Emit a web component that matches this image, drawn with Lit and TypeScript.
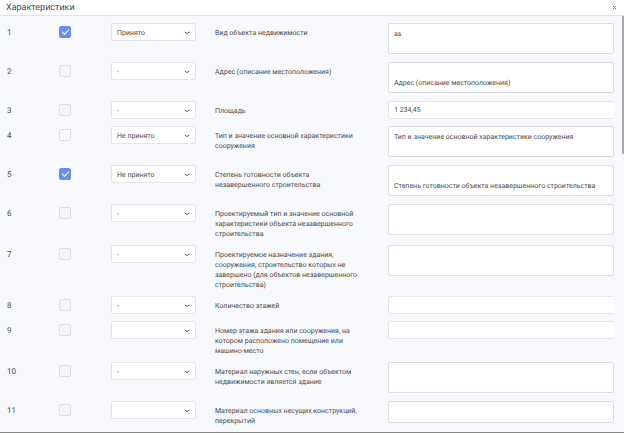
import { LitElement, html, css, svg } from "lit";
import { customElement } from "lit/decorators.js";
import { classMap } from "lit/directives/class-map.js";

type FieldKind = "area" | "short" | "line";

interface Row {
  label: string;
  status: string;
  enabled?: boolean;
  checked?: boolean;
  kind: FieldKind;
  value: string;
}

const rows: Row[] = [
  { label: "Вид объекта недвижимости", status: "Принято", enabled: true, checked: true, kind: "area", value: "as" },
  { label: "Адрес (описание местоположения)", status: "-", kind: "area", value: "\nАдрес (описание местоположения)" },
  { label: "Площадь", status: "-", kind: "line", value: "1 234,45" },
  { label: "Тип и значение основной характеристики сооружения", status: "Не принято", enabled: true, kind: "area", value: "Тип и значение основной характеристики сооружения" },
  { label: "Степень готовности объекта незавершенного строительства", status: "Не принято", enabled: true, checked: true, kind: "area", value: "\nСтепень готовности объекта незавершенного строительства" },
  { label: "Проектируемый тип и значение основной характеристики объекта незавершенного строительства", status: "-", kind: "area", value: "" },
  { label: "Проектируемое назначение здания, сооружения, строительство которых не завершено (для объектов незавершенного строительства)", status: "-", kind: "area", value: "" },
  { label: "Количество этажей", status: "-", kind: "line", value: "" },
  { label: "Номер этажа здания или сооружения, на котором расположено помещение или машино-место", status: "", kind: "line", value: "" },
  { label: "Материал наружных стен, если объектом недвижимости является здание", status: "-", kind: "area", value: "" },
  { label: "Материал основных несущих конструкций, перекрытий", status: "", kind: "short", value: "" },
];

const statuses = ["", "-", "Принято", "Не принято"];

@customElement("app-root")
export class AppRoot extends LitElement {
  static styles = css`
    :host {
      display: flex;
      flex-direction: column;
      position: relative;
      height: 100vh;
      box-sizing: border-box;
      overflow: hidden;
      border-bottom: 1px solid #858587;
      background: #f8f9fc;
      color: #494b50;
      font: 7px/10px Roboto, "Noto Sans", sans-serif;
      text-rendering: geometricPrecision;
    }
    * {
      box-sizing: border-box;
    }
    .header {
      display: flex;
      flex: none;
      align-items: center;
      justify-content: space-between;
      height: 16px;
      padding: 0 6px;
      background: #fff;
      border-bottom: 1px solid #e2e3e7;
    }
    .title {
      margin: 0;
      font-size: 9px;
      font-weight: 400;
      line-height: 14px;
    }
    .close {
      display: flex;
      padding: 1px;
      border: 0;
      background: none;
      color: #77797e;
    }
    .body {
      flex: 1;
      min-height: 0;
      overflow: auto;
      scrollbar-width: none;
      padding: 7px 10px 0 7px;
    }
    .row {
      display: grid;
      grid-template-columns: 52fr 52fr 104fr 173fr 226fr;
      align-items: start;
      padding-bottom: 6px;
    }
    .num,
    .label {
      padding-top: 5px;
    }
    .label {
      max-width: 146px;
    }
    .num {
      font-size: 8px;
    }
    .check {
      appearance: none;
      display: grid;
      place-items: center;
      width: 12px;
      height: 12px;
      margin: 3px 0 0;
      border: 1px solid #dcdde1;
      border-radius: 2px;
      background: #fff;
    }
    .check:disabled {
      background: #f4f5f7;
    }
    .check:checked {
      border-color: #678ff0;
      background: #678ff0;
    }
    .check:checked::before {
      content: "";
      width: 6px;
      height: 3px;
      margin-bottom: 2px;
      border: solid #fff;
      border-width: 0 0 1px 1px;
      transform: rotate(-45deg);
    }
    .pick {
      position: relative;
      width: 85px;
    }
    .select,
    .field {
      display: block;
      width: 100%;
      height: 18px;
      margin: 0 0 1px;
      border: 1px solid #e4e5e9;
      border-radius: 2px;
      background: #fff;
      color: inherit;
      font: inherit;
      text-rendering: inherit;
      outline: none;
    }
    .select {
      appearance: none;
      padding: 1px 16px 0 5px;
    }
    .arrow {
      position: absolute;
      top: 8px;
      right: 6px;
      pointer-events: none;
    }
    .field {
      padding: 0 5px;
    }
    .field.line {
      border-right-color: transparent;
    }
    .field.area,
    .field.short {
      height: 31px;
      margin-bottom: 2px;
      padding: 5px 5px 0;
      border-color: #dddee3;
      resize: none;
      overflow: hidden;
    }
    .field.short {
      height: 22px;
    }
    .thumb {
      position: absolute;
      top: 16px;
      right: 0;
      width: 2px;
      height: 32%;
      background: #a9aaad;
    }
  `;

  private renderField(row: Row, i: number) {
    const classes = classMap({ field: true, [row.kind]: true });
    return row.kind === "line"
      ? html`<input class=${classes} id="field-${i}" type="text" .value=${row.value} />`
      : html`<textarea class=${classes} id="field-${i}" .value=${row.value}></textarea>`;
  }

  private renderRow(row: Row, i: number) {
    return html`
      <div class="row">
        <span class="num">${i + 1}</span>
        <input
          class="check"
          type="checkbox"
          aria-labelledby="label-${i}"
          .checked=${!!row.checked}
          ?disabled=${!row.enabled}
        />
        <div class="pick">
          <select class="select" aria-labelledby="label-${i}">
            ${statuses.map((s) => html`<option ?selected=${s === row.status}>${s}</option>`)}
          </select>
          <svg class="arrow" width="6" height="4" viewBox="0 0 6 4" aria-hidden="true">
            ${svg`<path d="M0.8 0.8 Q3 4 5.2 0.8" fill="none" stroke="#55575c" />`}
          </svg>
        </div>
        <label class="label" id="label-${i}" for="field-${i}">${row.label}</label>
        ${this.renderField(row, i)}
      </div>
    `;
  }

  render() {
    return html`
      <header class="header">
        <h1 class="title">Характеристики</h1>
        <button class="close" type="button" aria-label="Закрыть">
          <svg width="5" height="5" viewBox="0 0 5 5" aria-hidden="true">
            <path d="M1 1 L4 4 M4 1 L1 4" fill="none" stroke="currentColor" />
          </svg>
        </button>
      </header>
      <main class="body">${rows.map((row, i) => this.renderRow(row, i))}</main>
      <div class="thumb"></div>
    `;
  }
}
